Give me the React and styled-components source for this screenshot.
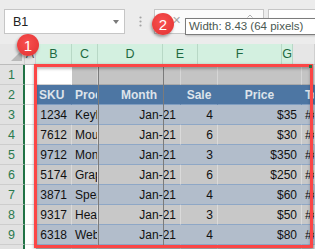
import React from "react";
import styled, { createGlobalStyle } from "styled-components";

const Global = createGlobalStyle`
  html, body { margin: 0; padding: 0; }
  body {
    width: 315px; height: 249px; overflow: hidden;
    background: #ececec;
    font-family: "Liberation Sans", Arial, sans-serif;
  }
`;

const Page = styled.div`
  position: relative;
  width: 315px;
  height: 249px;
  overflow: hidden;
  background: #ececec;
`;

const FormulaBar = styled.div`
  display: flex;
  align-items: flex-start;
  height: 44px;
  padding: 9px 0 0 4px;
  box-sizing: border-box;
`;

const NameBox = styled.div`
  display: flex;
  align-items: center;
  justify-content: space-between;
  width: 121px;
  height: 25px;
  box-sizing: border-box;
  border: 1px solid #c6c6c6;
  background: #fff;
  padding: 0 5px 0 8px;
  font-size: 12.5px;
  color: #222;
`;

const Caret = styled.span`
  width: 0;
  height: 0;
  border-left: 3.5px solid transparent;
  border-right: 3.5px solid transparent;
  border-top: 4px solid #7a7a7a;
`;

const Dots = styled.svg`
  margin: 7px 0 0 14px;
  flex: none;
`;

const FxBox = styled.div`
  display: flex;
  align-items: flex-start;
  width: 110px;
  height: 25px;
  margin-left: 12px;
  box-sizing: border-box;
  border: 1px solid #c6c6c6;
  background: #fbfbfb;
  padding: 4px 0 0 17px;
  font-size: 11px;
  color: #a6a6a6;
  gap: 0;
`;

const FxMark = styled.svg`
  margin: 0 0 0 66px;
`;

const FormulaInput = styled.div`
  flex: 1;
  height: 25px;
  margin-left: 4px;
  box-sizing: border-box;
  border: 1px solid #c6c6c6;
  border-right: none;
  background: #fff;
`;

const Sheet = styled.div`
  position: relative;
`;

const HeaderRow = styled.div`
  display: flex;
  height: 21px;
  box-sizing: border-box;
  border-bottom: 1px solid #bcbcbc;
`;

const Corner = styled.div`
  position: relative;
  width: 25px;
  flex: none;
  background: #e6e6e6;
  border-right: 1px solid #cfcfcf;
  box-sizing: border-box;
`;

const SelectAll = styled.span`
  position: absolute;
  right: 2px;
  bottom: 3px;
  width: 0;
  height: 0;
  border-left: 11px solid transparent;
  border-bottom: 11px solid #b9b9b9;
`;

const ColHead = styled.div`
  width: ${(p) => p.$w}px;
  flex: ${(p) => (p.$w ? "none" : "1")};
  box-sizing: border-box;
  display: flex;
  align-items: center;
  justify-content: center;
  font-size: 12.5px;
  background: ${(p) => (p.$sel ? "#d3f0e0" : "#e6e6e6")};
  color: ${(p) => (p.$sel ? "#1d6a41" : "#555")};
  border-right: 1px solid ${(p) => (p.$sel ? "#b8d8c6" : "#cfcfcf")};
  overflow: hidden;
`;

const Row = styled.div`
  display: grid;
  grid-template-columns: 25px 11px 36px 26px 83px 37px 84px 1fr;
  height: 20px;
`;

const RowHead = styled.div`
  display: flex;
  align-items: center;
  justify-content: center;
  box-sizing: border-box;
  background: #e1e1e1;
  border-right: 2px solid #217346;
  border-bottom: 1px solid #cdcdcd;
  color: #2a7a4f;
  font-size: 12.5px;
  padding-top: 1px;
`;

const ACell = styled.div`
  background: #fff;
  box-sizing: border-box;
  border-bottom: 1px solid #dedede;
`;

const variants = {
  active: { bg: "#ffffff", line: "#d0d0d0", v: "#ffffff", color: "#111" },
  plain: { bg: "#c4c4c4", line: "#a9a9a9", v: "#d6d6d6", color: "#111" },
  head: { bg: "#4d76a3", line: "#7f9dc0", v: "#4d76a3", color: "#dde3ea" },
  band: { bg: "#b2bdcb", line: "#8ea7c6", v: "#b2bdcb", color: "#111" },
  grey: { bg: "#c8c8c8", line: "#8ea7c6", v: "#dadada", color: "#111" },
};

const Cell = styled.div`
  box-sizing: border-box;
  display: flex;
  align-items: center;
  justify-content: ${(p) =>
    p.$align === "right" ? "flex-end" : p.$align === "center" ? "center" : "flex-start"};
  padding: 1px ${(p) => (p.$align === "right" ? 4 : 2)}px 0 ${(p) => (p.$align === "left" ? 3 : 2)}px;
  background: ${(p) => variants[p.$v].bg};
  color: ${(p) => variants[p.$v].color};
  border-bottom: 1px solid ${(p) => variants[p.$v].line};
  border-right: 1px solid ${(p) => variants[p.$v].v};
  font-size: 12px;
  font-weight: ${(p) => (p.$v === "head" ? 700 : 400)};
  white-space: nowrap;
  overflow: hidden;
`;

const ResizeLine = styled.div`
  position: absolute;
  top: 21px;
  left: ${(p) => p.$x}px;
  width: 1px;
  height: 182px;
  background: #7b7b7b;
`;

const Selection = styled.div`
  position: absolute;
  left: 34px;
  top: 20px;
  width: 279px;
  height: 184px;
  box-sizing: border-box;
  border: 3px solid #fb4646;
  box-shadow: 0 1px 3px rgba(0, 0, 0, 0.35), inset 0 2px 3px rgba(0, 0, 0, 0.25);
`;

const FillHandle = styled.div`
  position: absolute;
  left: 309px;
  top: 21px;
  width: 3px;
  height: 3px;
  background: #217346;
`;

const Badge = styled.div`
  position: absolute;
  left: ${(p) => p.$x}px;
  top: ${(p) => p.$y}px;
  width: 22px;
  height: 22px;
  border-radius: 50%;
  background: radial-gradient(circle at 45% 40%, #f85050 0%, #e83a3a 70%, #d52e2e 100%);
  color: #fff;
  font-size: 15px;
  display: flex;
  align-items: center;
  justify-content: center;
  box-shadow: -1px 2px 3px rgba(0, 0, 0, 0.35);
`;

const Tooltip = styled.div`
  position: absolute;
  left: 185px;
  top: 18px;
  width: 140px;
  height: 17px;
  box-sizing: border-box;
  border: 1px solid #7c7c7c;
  background: #fff;
  color: #4a5852;
  font-size: 11.5px;
  padding: 1px 0 0 3px;
  white-space: nowrap;
  box-shadow: 1px 1px 2px rgba(0, 0, 0, 0.2);
`;

const headers = [
  { l: "A", w: 11, sel: false },
  { l: "B", w: 36, sel: true },
  { l: "C", w: 26, sel: true },
  { l: "D", w: 65, sel: true },
  { l: "E", w: 35, sel: true },
  { l: "F", w: 84, sel: true },
  { l: "G", w: 11, sel: true },
];

const data = [
  ["1234", "Keyboard", "4", "$35"],
  ["7612", "Mouse", "6", "$30"],
  ["9712", "Monitor", "3", "$350"],
  ["5174", "Graphics Card", "6", "$250"],
  ["3871", "Speakers", "4", "$60"],
  ["9317", "Headphones", "3", "$50"],
  ["6318", "Webcam", "4", "$80"],
];

export default function App() {
  return (
    <Page>
      <Global />
      <FormulaBar>
        <NameBox>
          B1
          <Caret />
        </NameBox>
        <Dots width="3" height="12" viewBox="0 0 3 12">
          <circle cx="1.5" cy="1.5" r="1.1" fill="#a3a3a3" />
          <circle cx="1.5" cy="5.5" r="1.1" fill="#a3a3a3" />
          <circle cx="1.5" cy="9.5" r="1.1" fill="#a3a3a3" />
        </Dots>
        <FxBox>
          ✕
          <FxMark width="6" height="4" viewBox="0 0 6 4">
            <path d="M0.5 3.5 L3 1 L5.5 3.5" stroke="#b0b0b0" strokeWidth="1" fill="none" />
          </FxMark>
        </FxBox>
        <FormulaInput />
      </FormulaBar>
      <Sheet>
        <HeaderRow>
          <Corner>
            <SelectAll />
          </Corner>
          {headers.map((h) => (
            <ColHead key={h.l} $w={h.w} $sel={h.sel}>
              {h.l}
            </ColHead>
          ))}
          <ColHead />
        </HeaderRow>
        <Row>
          <RowHead>1</RowHead>
          <ACell />
          <Cell $v="active" />
          <Cell $v="plain" />
          <Cell $v="plain" />
          <Cell $v="plain" />
          <Cell $v="plain" />
          <Cell $v="plain" />
        </Row>
        <Row>
          <RowHead>2</RowHead>
          <ACell />
          <Cell $v="head" $align="left">SKU</Cell>
          <Cell $v="head" $align="left">Product</Cell>
          <Cell $v="head" $align="center">Month</Cell>
          <Cell $v="head" $align="center">Sale</Cell>
          <Cell $v="head" $align="center">Price</Cell>
          <Cell $v="head" $align="left">Total</Cell>
        </Row>
        {data.map((r, i) => {
          const v = i % 2 === 0 ? "band" : "grey";
          return (
            <Row key={r[0]}>
              <RowHead>{i + 3}</RowHead>
              <ACell />
              <Cell $v={v} $align="right">{r[0]}</Cell>
              <Cell $v={v} $align="left">{r[1]}</Cell>
              <Cell $v={v} $align="right">Jan-21</Cell>
              <Cell $v={v} $align="right">{r[2]}</Cell>
              <Cell $v={v} $align="right">{r[3]}</Cell>
              <Cell $v={v} $align="left">########</Cell>
            </Row>
          );
        })}
        <Row>
          <RowHead>10</RowHead>
          <ACell />
          <Cell $v="plain" />
          <Cell $v="plain" />
          <Cell $v="plain" />
          <Cell $v="plain" />
          <Cell $v="plain" />
          <Cell $v="plain" />
        </Row>
        <ResizeLine $x={98} />
        <ResizeLine $x={163} />
        <Selection />
        <FillHandle />
      </Sheet>
      <Badge $x={17} $y={34}>1</Badge>
      <Badge $x={152} $y={13}>2</Badge>
      <Tooltip>Width: 8.43 (64 pixels)</Tooltip>
    </Page>
  );
}
